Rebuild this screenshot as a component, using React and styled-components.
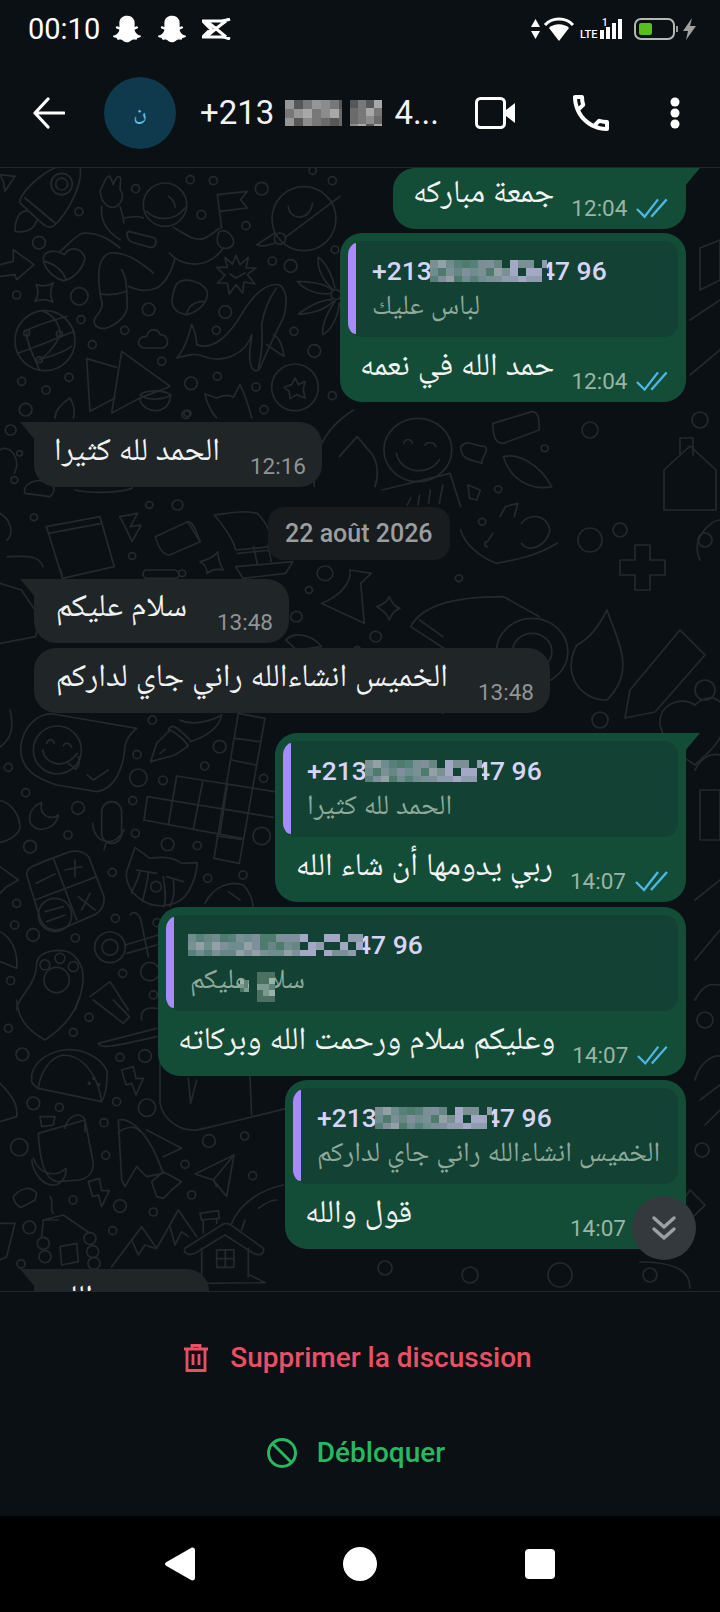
import React from 'react';
import styled, { createGlobalStyle } from 'styled-components';
import { FaSnapchatGhost } from 'react-icons/fa';
import { MdOutlinePhone } from 'react-icons/md';

// wallpaper doodles, traced per region; t maps region coords to chat coords (chat top = 168)
const doodles = [
  {
    t: 'translate(0,0) scale(0.3333)',
    paths: [
      'M0 20 L45 25 L15 70 L10 40 Z',
      'M60 95 C80 50 150 0 180 -5 L240 -5 C250 40 210 130 160 175 C140 185 130 170 60 105 Z',
      'M75 90 L165 165',
      'M85 130 C60 125 45 150 45 190 C70 195 100 190 112 155',
      'M300 70 C310 50 320 20 330 25 L340 50 C345 30 355 20 362 30 L360 65 C375 80 365 105 350 115 C330 125 305 110 300 70 Z',
      'M305 115 C300 160 320 190 360 215',
      'M360 115 C365 130 370 150 372 165',
      'M440 130 C470 160 525 160 555 120',
      'M505 85 C520 95 525 110 525 118',
      'M372 150 C400 145 420 145 430 150',
      'M360 240 C330 215 300 195 250 195 C230 200 210 225 180 250',
      'M130 270 C135 245 170 245 195 260 C200 240 240 230 255 270 C250 300 220 335 190 338 C160 330 130 300 130 270 Z',
      'M135 280 C165 290 190 310 198 335',
      'M385 190 L465 210 C472 225 465 240 450 238 L395 222 C380 215 378 195 385 190 Z',
      'M460 315 C420 280 370 250 330 255 C300 265 290 300 300 375 C300 380 340 385 380 370',
      'M300 380 C310 410 310 420 285 450 C275 475 300 485 320 480 C350 470 385 440 382 410 L380 370 C380 340 375 320 365 305',
      'M385 355 C420 370 440 370 470 360 C495 345 515 310 525 270',
      'M508 255 C530 280 570 295 610 285 C640 275 660 255 670 240',
      'M520 178 C550 195 580 220 610 212 C630 205 645 190 660 180',
      'M655 195 C665 180 690 190 700 215 C705 235 685 245 665 240 C650 230 650 210 655 195 Z',
      'M665 180 L652 80 L742 70 L722 95 L742 120 L660 130',
      'M865 115 C870 160 930 160 938 105',
      'M1020 85 L860 205',
      'M825 195 L770 230 C790 240 810 230 825 225',
      'M708 262 L720 290 L745 268 L738 300 L768 300 L742 320 L765 348 L732 342 L728 375 L708 350 L688 378 L682 345 L652 345 L675 322 L650 298 L682 298 L675 268 L698 288 Z',
      'M690 318 L708 330 L735 315',
      'M530 570 C545 555 560 530 575 470 C585 490 590 510 590 530 C640 550 690 500 730 430 C760 380 800 345 835 350 C860 360 865 400 850 450 C830 490 810 530 780 600 C770 615 755 610 750 580 C745 555 755 520 755 500 C740 555 670 590 610 565 C590 555 570 560 530 570 Z',
      'M830 360 C800 400 790 440 785 470 C790 520 785 560 775 600',
      'M820 500 C840 510 850 540 852 565 C835 555 815 540 800 530',
      'M995 365 C975 345 920 340 892 340 C910 365 960 385 995 375',
      'M1005 360 C1000 330 980 285 955 268 C950 300 970 340 1000 365',
      'M995 395 C960 395 920 420 895 438 C930 440 975 425 1000 400',
      'M1005 400 C985 430 965 470 968 500 C990 490 1015 450 1018 405',
      'M540 340 C570 330 610 345 622 370 C625 400 600 430 560 440 C530 435 510 420 518 385 C522 360 530 345 540 340 Z',
      'M560 440 C565 410 590 400 615 400',
      'M108 350 C125 355 145 355 160 345 C150 365 150 385 158 402 C140 392 125 392 105 400 C115 385 115 365 108 350 Z',
      'M75 490 C110 470 150 460 200 445',
      'M55 555 C100 540 150 520 222 490',
      'M118 575 C150 565 190 555 215 535',
      'M80 495 C80 530 100 560 118 605',
      'M180 500 C180 470 160 440 130 430',
      'M180 500 C165 540 130 570 118 575',
      'M260 572 L270 730 L345 690',
      'M260 572 L350 598',
      'M365 550 L510 655 C490 665 470 670 420 690 L335 735 Z',
      'M420 690 C420 715 450 730 470 728 C495 725 510 710 512 680',
      'M420 680 C440 665 490 665 512 680 C495 695 440 700 420 680 Z',
      'M430 540 C405 530 415 505 440 505 C445 480 475 480 480 500 C505 500 510 530 490 540 Z',
      'M615 678 L650 690 C670 680 690 680 700 688 L720 650 C735 680 745 710 755 750',
      'M615 678 C620 710 640 740 650 750',
      'M885 630 L895 650 L915 640 L910 665 L915 690 L890 680 L870 692 L868 670 L852 658 L875 650 Z',
      'M0 290 L40 280 L40 245 L102 290 L50 335 L45 320 L0 325',
      'M165 750 C165 720 195 700 210 690 C225 715 225 735 220 750',
    ],
    circles: [
      [185, 48, 32], [185, 48, 18], [495, 110, 65], [912, 152, 96], [840, 212, 17], [1008, 380, 15], [135, 518, 90],
      [80, 495, 9], [178, 498, 9], [118, 575, 9], [885, 658, 70],
      [571, 35, 12], [640, 38, 12], [785, 62, 19], [938, 8, 11], [997, 38, 12], [407, 62, 12], [237, 131, 12],
      [604, 140, 13], [738, 173, 12], [117, 224, 19], [1005, 245, 11], [817, 279, 12], [872, 294, 19], [50, 381, 12],
      [238, 385, 26], [446, 424, 19], [676, 432, 19], [243, 455, 12], [374, 487, 12], [649, 487, 12], [882, 490, 12],
      [277, 530, 12], [943, 549, 19], [485, 580, 12], [65, 640, 12], [207, 628, 12], [138, 666, 12], [573, 646, 19],
      [652, 625, 12], [768, 657, 12], [997, 683, 12], [77, 725, 19], [792, 725, 12], [558, 740, 12],
    ],
  },
  {
    t: 'translate(0,242) scale(0.35714,0.3333)',
    paths: [
      'M1110 130 C1120 190 1200 200 1230 150',
      'M1130 100 C1135 85 1150 85 1155 100',
      'M1190 105 C1195 95 1215 95 1220 110',
      'M880 230 C870 150 900 60 990 0',
      'M950 140 L1000 80 L1040 130 C1060 160 1060 200 1050 230',
      'M1070 240 L1260 190 L1290 290',
      'M1140 285 L1150 265 M1170 285 L1175 255 M1200 280 L1205 240 M1230 280 L1240 225',
      'M1380 40 L1490 5 C1505 5 1510 20 1510 60 L1410 100 C1390 100 1380 85 1380 40 Z',
      'M1290 110 C1310 85 1330 110 1360 110 C1370 130 1345 140 1350 160 C1320 150 1290 150 1290 110 Z',
      'M1410 140 C1450 130 1510 160 1545 230 C1500 240 1430 220 1410 140 Z',
      'M1310 225 L1345 240 L1335 270 L1315 265 Z',
      'M1400 320 L1415 290 L1450 280 L1440 320',
      'M1365 395 L1380 370 M1365 395 C1355 395 1355 410 1365 410',
      'M1290 360 C1300 400 1340 440 1390 460 C1440 450 1500 440 1560 400',
      'M1460 340 C1480 310 1530 310 1540 360 C1530 410 1480 430 1460 400',
      'M130 350 L280 320 L320 470 L175 505 Z',
      'M135 370 L285 340',
      'M175 505 L170 480',
      'M335 320 L385 310 L365 350 L395 345 L370 395 L350 350 Z',
      'M435 380 L525 335 C535 335 545 345 560 395 L475 435 C460 435 445 420 435 380 Z',
      'M525 335 L560 395',
      'M560 455 C580 450 600 440 610 425 C610 440 615 460 625 480 C605 475 590 480 580 490 C580 475 575 465 560 455 Z',
      'M600 315 C640 310 680 300 720 310 C750 340 760 380 760 410 L660 420 C650 380 620 340 600 315 Z',
      'M660 470 L820 455 L800 490 L680 505 Z',
      'M710 410 L720 460 M750 405 L760 455 M665 430 L760 420',
      'M410 480 L490 480 C510 490 500 505 490 505 L410 505 C395 500 400 480 410 480 Z',
      'M980 480 L1040 490 L1010 520 L1020 640 L900 580 C950 560 985 520 980 480 Z',
      'M1055 590 C1070 585 1085 575 1090 560 C1095 575 1105 590 1120 595 C1105 600 1095 615 1090 630 C1085 610 1070 600 1055 590 Z',
      'M1150 650 C1180 590 1260 560 1410 560 L1510 620',
      'M1150 650 L1250 720 M1175 630 L1240 680',
      'M0 310 C30 330 40 370 20 390 M20 440 C60 440 110 430 120 470',
      'M0 520 L60 540 L110 620 L100 680 L0 700',
      'M210 240 C250 250 330 250 370 235 L360 190',
      'M70 250 C60 220 110 200 130 220 C150 215 160 240 140 260 Z',
      'M0 120 C30 100 60 150 40 190',
      'M800 690 C830 660 880 680 900 710 L830 720 Z',
      'M1060 880 C1100 870 1180 880 1240 910',
    ],
    circles: [
      [1170, 120, 95], [1490, 725, 100], [1490, 725, 55], [30, 60, 15], [55, 130, 8], [40, 210, 10], [525, 10, 10],
      [1525, 115, 10], [1395, 238, 10], [95, 322, 10], [418, 285, 10], [497, 285, 15], [1350, 335, 10], [370, 438, 10],
      [910, 490, 22], [510, 490, 10], [865, 540, 10], [1285, 505, 10], [1052, 680, 16], [830, 620, 16], [1000, 720, 10],
    ],
  },
  {
    t: 'translate(0,542) scale(0.3333)',
    paths: [
      'M160 12 L410 55 C395 70 380 80 375 110 C370 180 340 240 290 245 L170 225 C110 205 60 180 62 110 C70 50 110 10 160 12 Z',
      'M140 100 C145 85 160 88 163 100',
      'M190 108 C195 95 210 98 215 112',
      'M128 120 C135 165 195 180 232 130',
      'M205 160 L228 178 C238 165 240 150 235 140',
      'M262 195 L280 210 L325 180',
      'M452 155 L470 100 L510 60 C530 70 555 90 565 108 L525 135 Z',
      'M505 60 C515 40 525 45 570 90',
      'M540 30 C580 50 640 30 665 15 C660 50 620 80 570 95',
      'M480 130 L495 118',
      'M530 198 L825 245',
      'M442 260 L820 322',
      'M432 330 L725 385',
      'M715 10 L795 25 L718 460 L642 445 Z',
      'M530 198 L505 345',
      'M608 215 L580 358',
      'M682 225 L660 372',
      'M442 260 L432 330',
      'M705 85 L780 95',
      'M695 150 L768 165',
      'M650 378 L725 388',
      'M125 278 C85 290 75 345 110 355 C140 365 170 345 175 315 C155 330 115 320 125 278 Z',
      'M278 340 C280 395 340 420 372 360',
      'M312 420 L318 400',
      'M405 412 L450 445 C480 440 520 440 545 460 L592 458 C590 490 580 520 565 545 C540 590 470 600 425 570 C385 545 370 500 385 470 Z',
      'M420 485 C415 510 400 530 395 550',
      'M445 490 C440 530 430 560 428 575',
      'M490 500 C495 540 500 570 492 590',
      'M520 510 C525 540 520 570 510 590',
      'M410 480 L470 490',
      'M500 500 L550 515',
      'M80 495 C80 470 100 470 130 455 L210 425 C240 420 265 430 270 450 L312 560 C315 590 300 610 270 620 L190 655 C150 670 130 650 120 625 Z',
      'M160 445 L230 630',
      'M105 570 L290 500',
      'M195 480 L245 470 M225 450 L225 500',
      'M108 520 L165 492',
      'M235 560 L285 600 M270 550 L245 600',
      'M135 605 L190 590 M140 635 L195 615',
      'M50 900 C50 860 110 830 110 760 C115 720 190 710 220 735 C245 760 260 790 240 860 L225 900',
      'M375 705 L475 675',
      'M390 615 C400 600 420 610 425 640 L445 740',
      'M380 730 L470 705',
      'M270 860 L330 815 L385 900',
      'M-5 270 C40 280 60 320 60 355 C50 380 20 395 -5 398',
      'M0 470 L55 510 L20 530 L0 550',
      'M0 665 C30 680 55 720 50 775 L0 755',
      'M30 0 C45 60 30 90 -5 115',
      'M305 305 a30 30 0 0 1 60 0 v65 a30 30 0 0 1 -60 0 Z',
      'M615 580 C640 530 690 510 730 525 C745 540 755 560 760 590',
      'M685 545 L720 570',
    ],
    circles: [
      [172, 120, 72], [468, 530, 16], [165, 615, 50], [135, 765, 15], [180, 745, 15], [220, 770, 15], [170, 810, 38],
      [330, 712, 46], [330, 712, 24], [450, 785, 28],
      [457, 30, 12], [411, 134, 12], [25, 172, 12], [614, 168, 12], [489, 211, 13], [415, 203, 26], [791, 205, 12],
      [77, 248, 12], [398, 272, 12], [234, 294, 19], [659, 110, 19], [204, 375, 12], [406, 370, 12], [90, 410, 19],
      [503, 403, 19], [592, 407, 12], [785, 378, 26], [337, 487, 12], [623, 505, 12], [729, 495, 12], [50, 580, 12],
      [346, 625, 12], [44, 645, 12], [471, 638, 12], [99, 675, 19], [226, 684, 12], [32, 812, 12], [368, 790, 12], [460, 855, 12],
    ],
  },
  {
    t: 'translate(0,832) scale(0.3333)',
    paths: [
      'M95 240 C90 200 130 160 190 150 C240 145 300 165 322 215 C320 250 320 280 305 305 L115 265 C100 255 95 250 95 240 Z',
      'M115 265 C120 220 150 170 190 165 C240 165 290 210 305 305',
      'M115 400 L255 360 L280 490 C280 520 260 535 240 540 L170 545 C140 540 120 500 115 400 Z',
      'M120 350 L165 350 L160 375 L125 380 Z',
      'M195 385 C200 350 240 330 255 360 L255 395',
      'M95 480 C100 520 130 560 165 555 C185 550 200 530 198 505 C170 530 120 530 100 475',
      'M355 360 C390 350 440 400 470 470 L490 520 L440 530 L410 500 L375 560 L365 540 Z',
      'M440 390 L545 445 L490 470',
      'M355 400 C370 380 410 375 420 395',
      'M455 545 L490 515 L545 545 L515 570 L490 595 L470 590 Z',
      'M585 522 L702 465 L680 590 L640 540 Z',
      'M640 540 L702 465',
      'M640 540 L650 560',
      'M365 210 L400 200 L408 235 L430 235 L408 285 L395 250 L378 255 Z',
      'M265 545 L298 535 L305 572 L328 572 L305 620 L295 585 L278 590 Z',
      'M130 660 L190 645 L270 700',
      'M125 710 L130 660 L175 660',
      'M180 740 L230 730 L235 785 L185 795 Z',
      'M150 590 C165 610 145 620 160 640',
      'M335 800 L425 680 L470 745 L535 630 L590 710',
      'M395 720 L415 765 L435 735 L465 745',
      'M510 680 L525 735 L545 695 L565 710',
      'M600 640 L655 632 L658 655 L605 660 Z',
      'M610 660 L610 700',
      'M650 655 L650 670',
      'M555 745 L670 672 C680 668 690 670 700 680 L790 745 C795 760 780 770 760 760 L675 705 L585 760 C560 770 550 755 555 745 Z',
      'M605 745 L605 850 M745 745 L745 830',
      'M650 750 h52 v52 h-52 Z M676 750 v52 M650 776 h52',
      'M605 850 L795 848 C770 835 750 825 745 825',
      'M695 670 C720 610 780 570 850 555',
      'M775 625 C795 610 815 600 830 600',
      'M725 690 L735 660',
      'M480 190 L480 310 C490 360 540 395 590 390 C620 385 640 380 860 325',
      'M750 230 L755 345',
      'M565 235 L572 310 L590 240',
      'M50 0 C55 70 100 100 135 120 C180 90 220 50 235 0',
      'M280 0 L370 70 L388 50 L340 0',
      'M295 130 L470 85 M295 130 C300 145 320 145 470 110 M425 60 C420 30 440 20 470 25',
      'M0 250 C30 280 55 310 50 350 L0 365',
      'M40 590 C60 565 90 555 110 580 L105 600 L65 622 C50 620 40 600 40 590 Z',
      'M0 670 L45 670 L20 770 L0 780',
    ],
    circles: [
      [130, 730, 18], [135, 770, 18], [270, 715, 18], [278, 755, 18], [282, 790, 18], [268, 250, 3], [282, 235, 3], [296, 254, 3],
      [25, 85, 12], [267, 52, 12], [220, 97, 12], [67, 163, 19], [360, 172, 12], [435, 168, 19], [100, 310, 19], [178, 322, 12],
      [350, 305, 12], [441, 323, 26], [312, 368, 12], [627, 423, 19], [734, 408, 12], [58, 442, 26], [317, 466, 12], [555, 493, 12],
      [758, 527, 12], [575, 585, 12], [219, 600, 12], [360, 618, 19], [460, 636, 12], [88, 682, 19], [338, 692, 12], [63, 792, 12],
    ],
  },
  {
    // right edge and the area behind the short bubbles, in full page coords
    t: 'translate(0,-168)',
    paths: [
      'M690 320 L720 300 M690 375 L720 350',
      'M700 248 L720 240 L720 280 L700 290 Z',
      'M664 470 L690 446 L716 470 L716 510 L664 510 Z',
      'M680 455 L680 438 L693 438 L693 455',
      'M620 560 L635 560 L635 545 L650 545 L650 560 L665 560 L665 575 L650 575 L650 590 L635 590 L635 575 L620 575 Z',
      'M630 690 L680 630 L705 655 L655 712 L625 718 Z',
      'M695 705 C710 690 730 700 725 725 C720 745 705 755 695 765 C680 755 665 745 660 725 C658 705 680 695 695 705 Z',
      'M607 610 C617 640 637 670 607 700 C577 700 562 670 577 645 C587 640 597 630 607 610 Z',
      'M700 560 C690 540 710 520 720 520',
      'M695 770 C705 750 720 755 720 755 M700 790 L720 790 L720 840 L700 840 Z',
      'M695 900 L720 880 M695 960 L720 930',
      'M695 1000 C705 980 715 985 720 985',
      'M700 1100 L720 1085 M705 1125 L720 1110',
      'M690 1190 L705 1205 L690 1220 L680 1205 Z',
      'M695 1080 C700 1060 715 1055 720 1056',
      'M640 1262 C670 1262 690 1268 690 1288',
    ],
    circles: [
      [700, 420, 8], [590, 430, 8], [620, 530, 7], [590, 540, 12], [705, 540, 7], [705, 690, 10], [600, 720, 8],
      [705, 1020, 8], [702, 1150, 7], [650, 1275, 7], [560, 1275, 12], [470, 1275, 8], [385, 1268, 7],
    ],
  },
];

const GlobalStyle = createGlobalStyle`
  html, body {
    margin: 0;
    padding: 0;
    background: #0b1014;
  }
  * {
    box-sizing: border-box;
  }
`;

const Screen = styled.div`
  width: 720px;
  height: 1612px;
  display: flex;
  flex-direction: column;
  overflow: hidden;
  background: #0b1014;
  font-family: Roboto, 'Noto Naskh Arabic', 'DejaVu Sans', sans-serif;
  color: #f1f3f3;
`;

const StatusBar = styled.div`
  height: 50px;
  padding: 7px 24px 0 28px;
  display: flex;
  align-items: center;
  color: #fff;
`;

const Clock = styled.span`
  font-size: 29px;
  line-height: 32px;
  margin-right: 13px;
`;

const Ghost = styled(FaSnapchatGhost)`
  width: 28px;
  height: 28px;
  margin-right: 17px;
`;

const CapCut = styled.svg`
  margin-left: -2px;
`;

const StatusRight = styled.div`
  margin-left: auto;
  display: flex;
  align-items: center;
`;

const StatusIcon = styled.svg`
  margin-left: ${({ $gap }) => $gap || 0}px;
`;

const Header = styled.header`
  height: 118px;
  padding: 8px 33px 0;
  display: flex;
  align-items: center;
  border-bottom: 1px solid #202529;
`;

const Avatar = styled.div`
  width: 72px;
  height: 72px;
  margin-left: 39px;
  border-radius: 50%;
  background: #0f3a4e;
  color: #5ec0ea;
  font-size: 23px;
  display: flex;
  align-items: center;
  justify-content: center;
`;

const Title = styled.div`
  margin-left: 24px;
  font-size: 33px;
  line-height: 40px;
  display: flex;
  align-items: center;
`;

const TitleEnd = styled.span`
  margin-left: 12px;
`;

const HeaderActions = styled.div`
  margin-left: auto;
  display: flex;
  align-items: center;
  margin-right: 6px;
`;

const PhoneIcon = styled(MdOutlinePhone)`
  width: 48px;
  height: 48px;
  margin-left: 52px;
  color: #fff;
`;

const MoreDots = styled.svg`
  margin-left: 54px;
`;

const Chat = styled.main`
  flex: 1;
  position: relative;
  overflow: hidden;
  border-bottom: 1px solid #22272b;
`;

const Wallpaper = styled.svg`
  position: absolute;
  top: 0;
  left: 0;
  fill: none;
  stroke: #24292d;
  stroke-width: 1.7;
  stroke-linecap: round;
  stroke-linejoin: round;
  path, circle {
    vector-effect: non-scaling-stroke;
  }
`;

const Messages = styled.div`
  position: relative;
  display: flex;
  flex-direction: column;
`;

const Bubble = styled.div`
  position: relative;
  flex: none;
  width: ${({ $w }) => $w}px;
  height: ${({ $h }) => $h}px;
  margin-top: ${({ $top }) => $top || 0}px;
  margin-left: ${({ $out }) => ($out ? 'auto' : '34px')};
  margin-right: ${({ $out }) => ($out ? '34px' : '0')};
  padding: 8px;
  display: flex;
  flex-direction: column;
  justify-content: flex-end;
  background: ${({ $out }) => ($out ? '#144d37' : '#202528')};
  border-radius: 22px;
  ${({ $tail, $out }) =>
    $tail &&
    ($out
      ? 'border-top-right-radius: 0;'
      : 'border-top-left-radius: 0;')}
  &::after {
    content: '';
    display: ${({ $tail }) => ($tail ? 'block' : 'none')};
    position: absolute;
    top: 0;
    width: 15px;
    height: 18px;
    background: inherit;
    ${({ $out }) =>
      $out
        ? 'right: -14px; clip-path: polygon(0 0, 100% 0, 0 100%);'
        : 'left: -14px; clip-path: polygon(0 0, 100% 0, 100% 100%);'}
  }
`;

const Quote = styled.div`
  flex: none;
  height: 96px;
  margin-bottom: auto;
  padding: 13px 8px 0 24px;
  position: relative;
  overflow: hidden;
  background: #134133;
  border-radius: 14px;
  &::before {
    content: '';
    position: absolute;
    top: 2px;
    bottom: 3px;
    left: 0;
    width: 8px;
    background: #a78bfa;
    border-radius: 12px 0 0 12px;
  }
`;

const QuoteName = styled.div`
  display: flex;
  align-items: center;
  font-size: 26.5px;
  line-height: 34px;
  font-weight: 500;
  color: #d8d4f7;
`;

const QuoteText = styled.div`
  position: relative;
  width: fit-content;
  margin-top: -1px;
  font-size: 28px;
  line-height: 36px;
  white-space: nowrap;
  color: #8fa99b;
`;

const Row = styled.div`
  padding: 0 ${({ $out }) => ($out ? '10px' : '8px')} 0 12px;
  display: flex;
  justify-content: ${({ $spread }) => ($spread ? 'space-between' : 'flex-end')};
  align-items: flex-end;
`;

const MessageText = styled.span`
  font-size: 32px;
  line-height: 40px;
  margin-bottom: 10px;
  margin-right: ${({ $out }) => ($out ? '17px' : '30px')};
  white-space: nowrap;
`;

const Meta = styled.span`
  display: flex;
  align-items: center;
  gap: 8px;
  height: 26px;
  min-width: ${({ $minW }) => $minW || 0}px;
  font-size: 22.5px;
  color: ${({ $out }) => ($out ? '#98b5a5' : '#909496')};
`;

const DateChip = styled.div`
  align-self: flex-start;
  margin: 20px 0 19px 268px;
  padding: 0 17px;
  height: 53px;
  display: flex;
  align-items: center;
  border-radius: 16px;
  background: #181c1f;
  font-size: 25px;
  font-weight: 500;
  color: #9b9ea1;
`;

const ScrollButton = styled.div`
  position: absolute;
  right: 24px;
  bottom: 31px;
  width: 64px;
  height: 64px;
  border-radius: 50%;
  background: #33393d;
  display: flex;
  align-items: center;
  justify-content: center;
`;

const Footer = styled.footer`
  height: 224px;
  padding: 18px 0 16px;
  display: flex;
  flex-direction: column;
`;

const Action = styled.div`
  height: 95px;
  padding-right: ${({ $shift }) => $shift}px;
  display: flex;
  align-items: center;
  justify-content: center;
  gap: ${({ $gap }) => $gap}px;
  font-size: 28px;
  font-weight: 500;
  color: ${({ $color }) => $color};
`;

const NavBar = styled.nav`
  height: 96px;
  background: #000;
  display: flex;
  align-items: center;
  justify-content: center;
  gap: 148px;
`;

const MosaicSvg = styled.svg`
  flex: none;
  display: block;
  margin: ${({ $margin }) => $margin || '0'};
  position: relative;
`;

const Blot = styled(MosaicSvg)`
  position: absolute;
  top: ${({ $y }) => $y}px;
  left: ${({ $x }) => $x}px;
`;

const greys = ['#8c8c8c', '#6a6a6a', '#a8a8a8', '#575757', '#787878', '#969696'];
const bluish = ['#7b9094', '#688683', '#58807a', '#7f8f9c', '#6f8d8f', '#4f7a6e', '#93a0a6', '#6f8d8f'];
const lavender = ['#a3a9c4', '#134133', '#8f9cae', '#7b9094', '#134133', '#a3a9c4'];
const greenish = ['#5d8378', '#7a9a90', '#4c7163', '#9ab3a8'];

// pixelated patch over a blurred number; the last cells can use a second palette
const Mosaic = ({ w, h, cell = 8, palette = bluish, tail, tailFrom = 0.6, seed = 7, as: Comp = MosaicSvg, ...rest }) => {
  const rects = [];
  let s = seed;
  for (let y = 0; y < h; y += cell) {
    for (let x = 0; x < w; x += cell) {
      s = (s * 137 + 59) % 1009;
      const colors = tail && x > w * tailFrom ? tail : palette;
      rects.push(<rect key={`${x}-${y}`} x={x} y={y} width={cell} height={cell} fill={colors[s % colors.length]} />);
    }
  }
  return (
    <Comp width={w} height={h} viewBox={`0 0 ${w} ${h}`} shapeRendering="crispEdges" {...rest}>
      {rects}
    </Comp>
  );
};

const Ticks = () => (
  <svg width="34" height="21" viewBox="0 0 34 21" fill="none" stroke="#4fb6e6" strokeWidth="2.4">
    <path d="M2 11 L10 19 L24 1 M17 19 L33 1" />
  </svg>
);

const Time = ({ out, minW, children }) => (
  <Meta $out={out} $minW={minW}>
    {children}
    {out && <Ticks />}
  </Meta>
);

const NameLine = ({ patch = 117, prefix = true, seed }) => (
  <QuoteName>
    {prefix && '+213'}
    <Mosaic w={patch} h={22} seed={seed} tail={lavender} $margin="0 -7px 0 -2px" />
    47 96
  </QuoteName>
);

const Reply = ({ w, top, tail, spread, quote, text, time, patch, prefix, seed, children }) => (
  <Bubble $out $w={w} $h={169} $top={top} $tail={tail}>
    <Quote>
      <NameLine patch={patch} prefix={prefix} seed={seed} />
      <QuoteText dir="rtl">
        {quote}
        {children}
      </QuoteText>
    </Quote>
    <Row $out $spread={spread}>
      <MessageText $out dir="rtl">
        {text}
      </MessageText>
      <Time out>{time}</Time>
    </Row>
  </Bubble>
);

const Incoming = ({ w, h = 65, top, tail, text, time, minW }) => (
  <Bubble $w={w} $h={h} $top={top} $tail={tail}>
    <Row>
      <MessageText dir="rtl">{text}</MessageText>
      <Time minW={minW}>{time}</Time>
    </Row>
  </Bubble>
);

export default function App() {
  return (
    <>
      <GlobalStyle />
      <Screen>
        <StatusBar>
          <Clock>00:10</Clock>
          <Ghost />
          <Ghost />
          <CapCut width="30" height="22" viewBox="0 0 30 22" fill="none" stroke="#fff" strokeWidth="3.2">
            <path d="M1 3 H20 C24 3 26 2 29 1 M1 19 H20 C24 19 26 20 29 21 M5 3 C12 8 18 13 25 19 M25 3 C18 8 12 13 5 19 M2 3 L10 11 L2 19" />
          </CapCut>
          <StatusRight>
            <StatusIcon width="9" height="20" viewBox="0 0 9 20" fill="#fff">
              <path d="M4.5 0 L9 8 H0 Z M0 12 H9 L4.5 20 Z" />
            </StatusIcon>
            <StatusIcon $gap={3} width="32" height="24" viewBox="0 0 32 24" fill="#fff">
              <path d="M6 11 C11 6 21 6 26 11 L16 24 Z" />
              <path d="M2 8 C9 0 23 0 30 8" fill="none" stroke="#fff" strokeWidth="3" />
            </StatusIcon>
            <StatusIcon $gap={5} width="44" height="24" viewBox="0 0 44 24" fill="#fff">
              <text x="0" y="21" fontFamily="Roboto" fontSize="11" fontWeight="500">LTE</text>
              <text x="22" y="9" fontFamily="Roboto" fontSize="10" fontWeight="500">1</text>
              <path d="M20 13 h4 v9 h-4 Z M26 10 h4 v12 h-4 Z M32 6 h4 v16 h-4 Z M38 2 h4 v20 h-4 Z" />
            </StatusIcon>
            <StatusIcon $gap={10} width="46" height="22" viewBox="0 0 46 22" fill="none">
              <rect x="1" y="1" width="39" height="20" rx="6" stroke="#b5b8b5" strokeWidth="2" />
              <rect x="5" y="5" width="13" height="12" rx="2" fill="#55c11b" />
              <rect x="42" y="8" width="2" height="6" fill="#999" />
            </StatusIcon>
            <StatusIcon $gap={3} width="13" height="22" viewBox="0 0 13 22" fill="#a0a0a0">
              <path d="M9 0 L0 13 H5 L3 22 L13 8 H7 Z" />
            </StatusIcon>
          </StatusRight>
        </StatusBar>

        <Header>
          <svg width="32" height="32" viewBox="0 0 32 32" fill="none" stroke="#fff" strokeWidth="3.2" strokeLinecap="round" strokeLinejoin="round">
            <path d="M2 16 H31 M15 2 L2 16 L15 30" />
          </svg>
          <Avatar>ن</Avatar>
          <Title>
            +213
            <Mosaic w={57} h={26} cell={9} palette={greys} seed={11} $margin="0 0 0 11px" />
            <Mosaic w={32} h={26} cell={8} palette={greys} seed={29} $margin="0 0 0 8px" />
            <TitleEnd>4...</TitleEnd>
          </Title>
          <HeaderActions>
            <svg width="40" height="32" viewBox="0 0 40 32" fill="none">
              <rect x="1.5" y="1.5" width="28" height="29" rx="4" stroke="#fff" strokeWidth="3" />
              <path d="M31 13 L40 6 V26 L31 19 Z" fill="#fff" />
            </svg>
            <PhoneIcon />
            <MoreDots width="12" height="32" viewBox="0 0 12 32" fill="#fff">
              <circle cx="6" cy="5" r="4.5" />
              <circle cx="6" cy="16" r="4.5" />
              <circle cx="6" cy="27" r="4.5" />
            </MoreDots>
          </HeaderActions>
        </Header>

        <Chat>
          <Wallpaper width="720" height="1123" viewBox="0 0 720 1123">
            {doodles.map((group) => (
              <g key={group.t} transform={group.t}>
                {group.paths.map((d) => (
                  <path key={d} d={d} />
                ))}
                {group.circles.map(([cx, cy, r]) => (
                  <circle key={`${cx}-${cy}-${r}`} cx={cx} cy={cy} r={r} />
                ))}
              </g>
            ))}
          </Wallpaper>
          <Messages>
            <Bubble $out $w={293} $h={61} $tail>
              <Row $out>
                <MessageText $out dir="rtl">جمعة مباركه</MessageText>
                <Time out>12:04</Time>
              </Row>
            </Bubble>
            <Reply w={346} top={4} quote="لباس عليك" text="حمد الله في نعمه" time="12:04" seed={5} />
            <Incoming w={288} top={20} tail text="الحمد لله كثيرا" time="12:16" />
            <DateChip>22 août 2026</DateChip>
            <Incoming w={255} h={64} tail text="سلام عليكم" time="13:48" />
            <Incoming w={516} top={5} text="الخميس انشاءالله راني جاي لداركم" time="13:48" />
            <Reply w={411} top={20} tail quote="الحمد لله كثيرا" text="ربي يدومها أن شاء الله" time="14:07" seed={5} />
            <Reply w={528} top={5} quote="سلام عليكم" text="وعليكم سلام ورحمت الله وبركاته" time="14:07" patch={175} prefix={false} seed={23}>
              <Mosaic as={Blot} w={18} h={30} cell={6} palette={greenish} seed={3} $x={67} $y={11} />
              <Mosaic as={Blot} w={9} h={12} cell={4} palette={greenish} seed={9} $x={50} $y={19} />
            </Reply>
            <Reply w={401} top={4} spread quote="الخميس انشاءالله راني جاي لداركم" text="قول والله" time="14:07" seed={5} />
            <Incoming w={175} top={20} tail text="الله" minW={70} />
          </Messages>
          <ScrollButton>
            <svg width="26" height="26" viewBox="0 0 26 26" fill="none" stroke="#9aa0a4" strokeWidth="3.4" strokeLinecap="round" strokeLinejoin="round">
              <path d="M3 3 L13 12 L23 3 M3 14 L13 23 L23 14" />
            </svg>
          </ScrollButton>
        </Chat>

        <Footer>
          <Action $color="#ea5064" $gap={22} $shift={4}>
            <svg width="24" height="28" viewBox="0 0 24 28" fill="none" stroke="#ea5064" strokeWidth="2.8">
              <path d="M0 5 H24 M8 4 V1.5 H16 V4 M3 5 V26.5 H21 V5 M9 10 V21 M15 10 V21" />
            </svg>
            Supprimer la discussion
          </Action>
          <Action $color="#27b862" $gap={20} $shift={8}>
            <svg width="30" height="30" viewBox="0 0 30 30" fill="none" stroke="#27b862" strokeWidth="3">
              <circle cx="15" cy="15" r="13.5" />
              <path d="M5.5 5.5 L24.5 24.5" />
            </svg>
            Débloquer
          </Action>
        </Footer>

        <NavBar>
          <svg width="30" height="34" viewBox="0 0 30 34" fill="#fff">
            <path d="M26 1 C28 0 30 1 30 3 V31 C30 33 28 34 26 33 L1.5 19 C-0.5 18 -0.5 16 1.5 15 Z" />
          </svg>
          <svg width="34" height="34" viewBox="0 0 34 34" fill="#fff">
            <circle cx="17" cy="17" r="17" />
          </svg>
          <svg width="30" height="30" viewBox="0 0 30 30" fill="#fff">
            <rect width="30" height="30" rx="4" />
          </svg>
        </NavBar>
      </Screen>
    </>
  );
}
